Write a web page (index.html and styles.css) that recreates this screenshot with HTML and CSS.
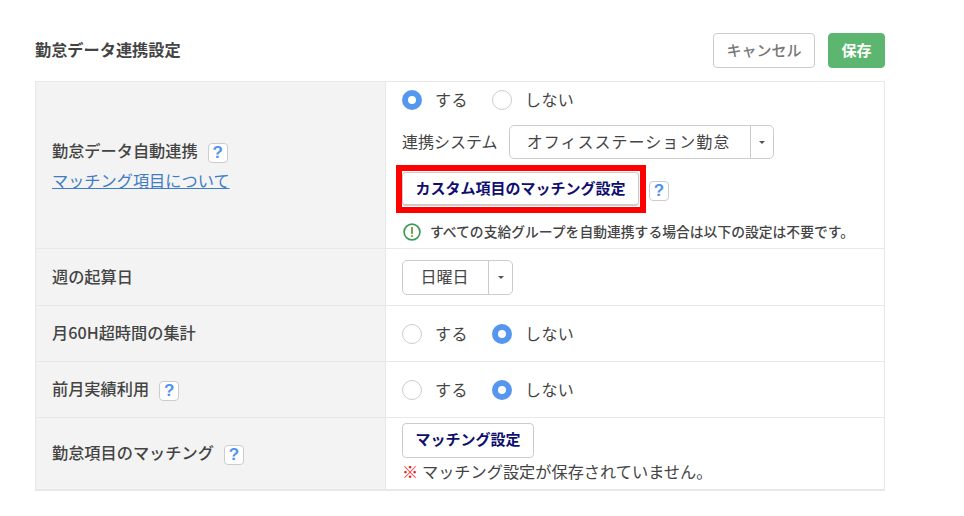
FILE: index.html
```html
<!DOCTYPE html>
<html lang="ja">
<head>
<meta charset="utf-8">
<title>勤怠データ連携設定</title>
<link rel="stylesheet" href="styles.css">
</head>
<body>
<main class="page">
  <header class="head">
    <h1 class="title">勤怠データ連携設定</h1>
    <div class="actions">
      <button class="btn btn-cancel">キャンセル</button>
      <button class="btn btn-save">保存</button>
    </div>
  </header>
  <section class="table">
    <div class="row row-1">
      <div class="label label-stack">
        <div class="label-line">勤怠データ自動連携<span class="help">?</span></div>
        <a class="link" href="#">マッチング項目について</a>
      </div>
      <div class="value value-stack">
        <div class="radios">
          <span class="radio on"></span><span class="radio-text">する</span>
          <span class="radio"></span><span class="radio-text">しない</span>
        </div>
        <div class="system">
          <span class="system-label">連携システム</span>
          <div class="select"><span class="select-text wide">オフィスステーション勤怠</span><span class="caret-box"><span class="caret"></span></span></div>
        </div>
        <div class="custom">
          <div class="marked">
            <button class="btn btn-navy btn-custom">カスタム項目のマッチング設定</button>
            <span class="mark"></span>
          </div>
          <span class="help help-custom">?</span>
        </div>
        <div class="note">
          <svg class="note-icon" viewBox="0 0 18 18" width="18" height="18" aria-hidden="true"><circle cx="9" cy="9" r="7.9" fill="none" stroke="#3f9a58" stroke-width="1.7"/><path d="M9 4.6v5.6" stroke="#6f9a3a" stroke-width="1.8" stroke-linecap="round"/><circle cx="9" cy="13" r="1.1" fill="#6f9a3a"/></svg>
          <span>すべての支給グループを自動連携する場合は以下の設定は不要です。</span>
        </div>
      </div>
    </div>
    <div class="row row-2">
      <div class="label">週の起算日</div>
      <div class="value">
        <div class="select"><span class="select-text narrow">日曜日</span><span class="caret-box"><span class="caret"></span></span></div>
      </div>
    </div>
    <div class="row row-3">
      <div class="label">月60H超時間の集計</div>
      <div class="value">
        <div class="radios">
          <span class="radio"></span><span class="radio-text">する</span>
          <span class="radio on"></span><span class="radio-text">しない</span>
        </div>
      </div>
    </div>
    <div class="row row-3">
      <div class="label">前月実績利用<span class="help">?</span></div>
      <div class="value">
        <div class="radios">
          <span class="radio"></span><span class="radio-text">する</span>
          <span class="radio on"></span><span class="radio-text">しない</span>
        </div>
      </div>
    </div>
    <div class="row row-5">
      <div class="label">勤怠項目のマッチング<span class="help">?</span></div>
      <div class="value value-stack value-last">
        <button class="btn btn-navy btn-match">マッチング設定</button>
        <div class="warn"><span class="warn-mark">※</span><span class="warn-text">マッチング設定が保存されていません。</span></div>
      </div>
    </div>
  </section>
</main>
</body>
</html>
```
FILE: styles.css
```css
* { box-sizing: border-box; }
html, body { margin: 0; padding: 0; background: #fff; }
body {
  font-family: "Noto Sans CJK JP", "Noto Sans", sans-serif;
  color: #444;
  font-size: 16px;
  width: 964px;
  height: 516px;
  overflow: hidden;
}
.page { width: 850px; margin-left: 35px; padding-top: 33px; }
.head {
  display: flex;
  justify-content: space-between;
  align-items: center;
  height: 35px;
  margin-bottom: 13px;
}
.title { margin: 0; padding-bottom: 3px; font-size: 16.2px; font-weight: 700; color: #444; line-height: 32px; }
.actions { display: flex; gap: 13px; }
.btn {
  font-family: inherit;
  border-radius: 4px;
  background: #fff;
  border: 1px solid #ccc;
  padding: 0 0 2px;
  display: block;
}
.btn-cancel { width: 102px; height: 35px; font-size: 15px; color: #777; font-weight: 500; border-width: 1.5px; }
.btn-save { width: 57px; height: 35px; font-size: 15px; font-weight: 700; color: #fff; background: #5db66f; border-color: #5db66f; }
.table { border: 1px solid #e8e8e8; border-bottom-width: 2px; width: 850px; }
.row { display: flex; border-bottom: 1px solid #e8e8e8; }
.row:last-child { border-bottom: 0; }
.row-1 { height: 167px; }
.row-2 { height: 57px; }
.row-3 { height: 56px; }
.row-5 { height: 71px; }
.label {
  width: 350px;
  flex: none;
  background: #f3f3f3;
  border-right: 1px solid #e8e8e8;
  padding-left: 16px;
  padding-bottom: 3px;
  display: flex;
  align-items: center;
  font-size: 16.2px;
  font-weight: 500;
  line-height: 24px;
  color: #444;
}
.label-stack { flex-direction: column; align-items: flex-start; justify-content: center; }
.label-line { display: flex; align-items: center; height: 28px; }
.link { color: #3f7cc4; text-decoration: underline; line-height: 24px; margin-top: 4px; font-size: 16.2px; font-weight: 400; }
.help {
  width: 20px;
  height: 20px;
  margin-left: 10px;
  margin-top: 6px;
  border: 1px solid #ccc;
  border-radius: 4px;
  background: #fff;
  color: #4f93ee;
  font-size: 17px;
  font-weight: 700;
  font-family: "Liberation Sans", sans-serif;
  display: flex;
  align-items: center;
  justify-content: center;
  flex: none;
}
.value { flex: 1; padding-left: 16px; display: flex; align-items: center; }
.value-stack { flex-direction: column; align-items: flex-start; justify-content: flex-start; padding-top: 8px; }
.value-last { padding-top: 5px; }
.radios { display: flex; align-items: center; height: 20px; font-size: 16px; white-space: nowrap; }
.radio {
  width: 20px;
  height: 20px;
  border-radius: 50%;
  border: 1px solid #ccc;
  background: #fff;
  flex: none;
}
.radio.on { border: 6px solid #5596ee; }
.radio-text { margin-left: 13px; width: 57px; color: #444; flex: none; letter-spacing: 0.4px; padding-bottom: 2px; }
.system { display: flex; align-items: center; gap: 11px; margin-top: 15px; height: 34px; font-size: 16px; white-space: nowrap; }
.system-label { width: 96px; padding-bottom: 2px; }
.select {
  display: flex;
  height: 35px;
  border: 1px solid #ccc;
  border-radius: 5px;
  background: #fff;
}
.system .select { height: 34px; }
.select-text { display: flex; align-items: center; justify-content: center; border-right: 1px solid #ccc; font-size: 16px; white-space: nowrap; padding-bottom: 2px; }
.wide { width: 241px; letter-spacing: 1px; padding-right: 3px; }
.narrow { width: 86px; padding-right: 2px; }
.caret-box { width: 23px; display: flex; align-items: center; justify-content: center; }
.system .caret-box { width: 22px; }
.caret { width: 0; height: 0; border-left: 3px solid transparent; border-right: 3px solid transparent; border-top: 3px solid #555; }
.custom { display: flex; align-items: center; margin-top: 13px; height: 34px; }
.marked { position: relative; }
.mark { position: absolute; left: -6px; top: -7px; width: 250px; height: 48px; border: 6px solid #f00; pointer-events: none; }
.btn-navy { color: #0f0f70; font-weight: 700; font-size: 15px; }
.btn-custom { width: 237px; height: 34px; border-bottom-width: 2px; }
.help-custom { margin-left: 10px; margin-top: 3px; }
.note { display: flex; align-items: center; gap: 9px; margin-top: 14px; height: 24px; font-size: 13.8px; color: #444; font-weight: 500; white-space: nowrap; }
.note span { padding-bottom: 2px; }
.note-icon { flex: none; margin-left: 1px; }
.btn-match { width: 132px; height: 35px; padding-bottom: 4px; }
.warn { display: flex; align-items: center; font-size: 16.2px; line-height: 24px; margin-top: 1px; white-space: nowrap; }
.warn-mark { color: #f01010; width: 20px; }
```
